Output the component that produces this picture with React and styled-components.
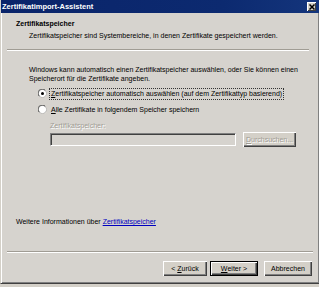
import React from 'react';
import styled, { createGlobalStyle } from 'styled-components';

const GlobalStyle = createGlobalStyle`
    html, body {
        margin: 0;
        padding: 0;
        background: #d4d0c8;
    }
    body {
        font-family: "Liberation Sans", Arial, sans-serif;
        font-size: 7px;
        color: #000;
    }
`

const RadioIcon = ({ checked }) => (
    <svg width="9" height="9" viewBox="0 0 12 12">
        <circle cx="6" cy="6" r="5.5" fill="#fff" stroke="#808080" />
        <path d="M1.6 9.4 A5 5 0 0 1 9.4 1.6" fill="none" stroke="#404040" strokeWidth="1" />
        <path d="M10.4 2.6 A5 5 0 0 1 2.6 10.4" fill="none" stroke="#e4e2dc" strokeWidth="1" />
        {checked && <circle cx="6" cy="6" r="2" fill="#000" />}
    </svg>
)

const CloseIcon = () => (
    <svg width="6" height="6" viewBox="0 0 6 6">
        <path d="M0.5 0.5 L5.5 5.5 M5.5 0.5 L0.5 5.5" stroke="#000" strokeWidth="1.5" />
    </svg>
)

export default function App() {
    return (
        <>
            <GlobalStyle />
            <Window>
                <TitleBar>
                    <TitleText>Zertifikatimport-Assistent</TitleText>
                    <CloseButton><CloseIcon /></CloseButton>
                </TitleBar>
                <Header>
                    <HeaderTitle>Zertifikatspeicher</HeaderTitle>
                    <HeaderSub>Zertifikatspeicher sind Systembereiche, in denen Zertifikate gespeichert werden.</HeaderSub>
                </Header>
                <Separator />
                <Body>
                    <Paragraph>
                        Windows kann automatisch einen Zertifikatspeicher auswählen, oder Sie können einen<br />
                        Speicherort für die Zertifikate angeben.
                    </Paragraph>
                    <Options>
                        <RadioRow>
                            <RadioIcon checked />
                            <RadioLabel $focused><u>Z</u>ertifikatspeicher automatisch auswählen (auf dem Zertifikattyp basierend)</RadioLabel>
                        </RadioRow>
                        <RadioRow>
                            <RadioIcon />
                            <RadioLabel><u>A</u>lle Zertifikate in folgendem Speicher speichern</RadioLabel>
                        </RadioRow>
                    </Options>
                    <StoreGroup>
                        <DisabledLabel>Zertifikatspeicher:</DisabledLabel>
                        <StoreRow>
                            <StoreInput />
                            <Button $width={53} $disabled><u>D</u>urchsuchen...</Button>
                        </StoreRow>
                    </StoreGroup>
                </Body>
                <InfoLine>
                    Weitere Informationen über <Link>Zertifikatspeicher</Link>
                </InfoLine>
                <Separator $bottom />
                <Footer>
                    <Button $width={44}>&lt;&nbsp;<u>Z</u>urück</Button>
                    <Button $width={48} $default><u>W</u>eiter&nbsp;&gt;</Button>
                    <Button $width={48} $gap>Abbrechen</Button>
                </Footer>
            </Window>
        </>
    )
}

const Window = styled.div`
    position: relative;
    width: 319px;
    height: 284px;
    box-sizing: border-box;
    background: #d6d3ce;
    border-left: 1px solid #d4d0c8;
    border-bottom: 1px solid #404040;
    box-shadow: inset 1px 0 0 #fff, inset 0 -1px 0 #808080, inset -1px 0 0 #808080;
    display: flex;
    flex-direction: column;
    overflow: hidden;
`

const TitleBar = styled.div`
    height: 13px;
    display: flex;
    align-items: center;
    justify-content: space-between;
    padding: 0 3px 0 2px;
    margin-left: -1px;
    background: linear-gradient(to right, #0a246a, #0c2a70 70%, #14357c);
`

const TitleText = styled.div`
    color: #fff;
    font-weight: bold;
    font-size: 7.5px;
`

const CloseButton = styled.div`
    width: 9px;
    height: 9px;
    background: #d4d0c8;
    display: flex;
    align-items: center;
    justify-content: center;
    box-shadow: inset 1px 1px 0 #fff, inset -1px -1px 0 #404040;
`

const Header = styled.div`
    height: 36px;
    box-sizing: border-box;
    padding: 7px 0 0 15px;
    display: flex;
    flex-direction: column;
    gap: 4px;
`

const HeaderTitle = styled.div`
    font-weight: bold;
    line-height: 8px;
`

const HeaderSub = styled.div`
    padding-left: 13px;
    line-height: 8px;
`

const Separator = styled.div`
    height: 1px;
    margin: ${p => p.$bottom ? '0 6px 0 6px' : '0 10px 0 6px'};
    background: #a09c94;
    border-bottom: 1px solid #fff;
`

const Body = styled.div`
    padding: 15px 0 0 28px;
    display: flex;
    flex-direction: column;
`

const Paragraph = styled.div`
    line-height: 8.5px;
`

const Options = styled.div`
    display: flex;
    flex-direction: column;
    gap: 5px;
    margin-top: 5px;
    padding-left: 9px;
`

const RadioRow = styled.div`
    display: flex;
    align-items: center;
    gap: 3px;
    height: 11px;
`

const RadioLabel = styled.span`
    padding: 1px 1px;
    line-height: 8px;
    outline: ${p => p.$focused ? '1px dotted #333' : 'none'};
`

const StoreGroup = styled.div`
    padding-left: 21px;
    margin-top: 7px;
    display: flex;
    flex-direction: column;
    gap: 2px;
`

const DisabledLabel = styled.div`
    color: #a09c94;
    text-shadow: 1px 1px 0 #fff;
    line-height: 8px;
`

const StoreRow = styled.div`
    display: flex;
    align-items: flex-start;
    gap: 7px;
`

const StoreInput = styled.div`
    width: 186px;
    height: 13px;
    margin-top: 1px;
    box-sizing: border-box;
    background: #d6d3ce;
    border-top: 1px solid #808080;
    border-left: 1px solid #808080;
    border-right: 1px solid #fff;
    border-bottom: 1px solid #fff;
    box-shadow: inset 1px 1px 0 #404040;
`

const Button = styled.div`
    width: ${p => p.$width}px;
    height: 15px;
    box-sizing: border-box;
    display: flex;
    align-items: center;
    justify-content: center;
    background: #d4d0c8;
    color: ${p => p.$disabled ? '#a09c94' : '#000'};
    text-shadow: ${p => p.$disabled ? '1px 1px 0 #fff' : 'none'};
    border: ${p => p.$default ? '1px solid #000' : 'none'};
    box-shadow: inset 1px 1px 0 #fff, inset -1px -1px 0 #404040, inset -2px -2px 0 #808080;
    margin-left: ${p => p.$gap ? '3px' : '0'};
    white-space: nowrap;
`

const InfoLine = styled.div`
    margin-top: auto;
    padding-left: 15px;
    margin-bottom: 25px;
    line-height: 8px;
`

const Link = styled.span`
    color: #0000c0;
    text-decoration: underline;
`

const Footer = styled.div`
    display: flex;
    justify-content: flex-end;
    align-items: flex-start;
    gap: 3px;
    padding: 8px 7px 0 0;
    height: 30px;
    box-sizing: border-box;
`
